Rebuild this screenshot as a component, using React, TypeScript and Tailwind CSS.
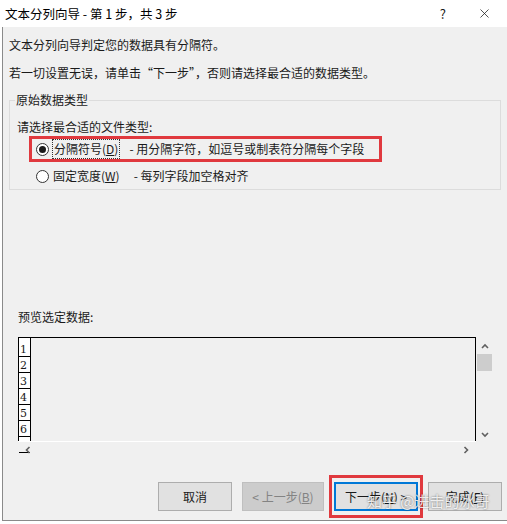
import { X } from 'lucide-react';

const rows = ['1', '2', '3', '4', '5', '6', ''];

function Radio({ checked }: { checked?: boolean }) {
  return (
    <span className="flex h-[13px] w-[13px] shrink-0 items-center justify-center rounded-full border border-[#333] bg-white">
      {checked && <span className="h-[7px] w-[7px] rounded-full bg-[#1a1a1a]" />}
    </span>
  );
}

function Chevron({ dir }: { dir: 'up' | 'down' | 'left' | 'right' }) {
  const d = {
    up: 'M2 7 L5 4 L8 7',
    down: 'M2 4 L5 7 L8 4',
    left: 'M6.5 2 L3.5 5 L6.5 8',
    right: 'M3.5 2 L6.5 5 L3.5 8',
  }[dir];
  return (
    <svg width="10" height="10" viewBox="0 0 10 10" className="text-[#606060]">
      <path d={d} fill="none" stroke="currentColor" strokeWidth="1.6" />
    </svg>
  );
}

export default function App() {
  return (
    <div className="relative h-[524px] w-[507px] overflow-hidden bg-white font-['Noto_Sans_CJK_SC','Noto_Sans',sans-serif] text-[12px] leading-[16px] text-[#1a1a1a]">
      {/* title bar */}
      <div className="flex h-[27px] items-center bg-white pl-[5px]">
        <span className="text-[12.5px] text-black">文本分列向导 - 第 1 步，共 3 步</span>
        <span className="ml-auto mr-[31px] text-[13px]">?</span>
        <X size={15} strokeWidth={1.2} className="mr-[15px]" />
      </div>

      <div className="ml-[2px] flex h-[494px] flex-col border-b border-l border-[#8a8a8a] bg-[#f0f0f0]">
        <p className="ml-[6px] mt-[10px]">文本分列向导判定您的数据具有分隔符。</p>
        <p className="ml-[6px] mt-[12px]">若一切设置无误，请单击“下一步”，否则请选择最合适的数据类型。</p>

        <fieldset className="ml-[6px] mt-[11px] h-[98px] w-[492px] border border-[#dcdcdc] pl-[5px]">
          <legend className="px-[1px] leading-[16px]">原始数据类型</legend>
          <p className="ml-[2px] mt-[11px]">请选择最合适的文件类型:</p>
          <div className="ml-[14px] mt-[1px] flex h-[26px] w-[353px] items-center border-[3px] border-[#e0393e] pl-[4px]">
            <Radio checked />
            <span className="ml-[3px] border border-dotted border-[#333] px-[1px] py-[1px]">
              分隔符号(<span className="underline">D</span>)
            </span>
            <span className="ml-[9px]">- 用分隔字符，如逗号或制表符分隔每个字段</span>
          </div>
          <div className="ml-[21px] mt-[6px] flex items-center">
            <Radio />
            <span className="ml-[4px]">
              固定宽度(<span className="underline">W</span>)
            </span>
            <span className="ml-[14px]">- 每列字段加空格对齐</span>
          </div>
        </fieldset>

        <p className="ml-[15px] mt-[119px]">预览选定数据:</p>

        <div className="ml-[15px] mt-[12px] flex">
          <div className="flex h-[104px] w-[458px] border-l border-r border-t border-black">
            <div className="flex w-[12px] flex-col border-r border-black bg-white">
              {rows.map((r, i) => (
                <div
                  key={i}
                  className={`flex h-[16px] shrink-0 items-end border-b border-black pl-[1px] font-['DejaVu_Serif',serif] text-[11px] leading-[13px] ${i === 0 ? 'h-[19px]' : ''}`}
                >
                  {r}
                </div>
              ))}
            </div>
            <div className="flex-1 bg-[#f0f0f0]" />
          </div>
          <div className="flex h-[104px] w-[17px] flex-col items-center">
            <div className="mt-[4px]">
              <Chevron dir="up" />
            </div>
            <div className="mt-[3px] h-[17px] w-[15px] bg-[#cdcdcd]" />
            <div className="mt-auto mb-[2px]">
              <Chevron dir="down" />
            </div>
          </div>
        </div>
        <div className="ml-[15px] flex h-[16px] w-[458px] items-center justify-between border-t border-white px-[5px]">
          <Chevron dir="left" />
          <Chevron dir="right" />
        </div>

        <div className="mr-[5px] mt-[18px] flex items-center justify-end">
          <button className="h-[29px] w-[74px] border border-[#adadad] bg-[#e1e1e1]">取消</button>
          <button className="ml-[10px] h-[29px] w-[82px] border border-[#bfbfbf] bg-[#cccccc] text-[#838383]">
            &lt; 上一步(<span className="underline">B</span>)
          </button>
          <div className="ml-[5px] border-[3px] border-[#e0393e] px-[2px] py-[4px]">
            <button className="h-[29px] w-[84px] border-2 border-[#0078d7] bg-[#e1e1e1]">
              下一步(<span className="underline">N</span>) &gt;
            </button>
          </div>
          <button className="ml-[5px] h-[29px] w-[74px] border border-[#adadad] bg-[#e1e1e1]">
            完成(<span className="underline">F</span>)
          </button>
        </div>
      </div>

      <div className="absolute left-[367px] top-[491px] text-[15px] leading-[20px] text-white/85 [text-shadow:0_0_2px_rgba(0,0,0,0.6)]">
        知乎 @进击的冰哥
      </div>
    </div>
  );
}
